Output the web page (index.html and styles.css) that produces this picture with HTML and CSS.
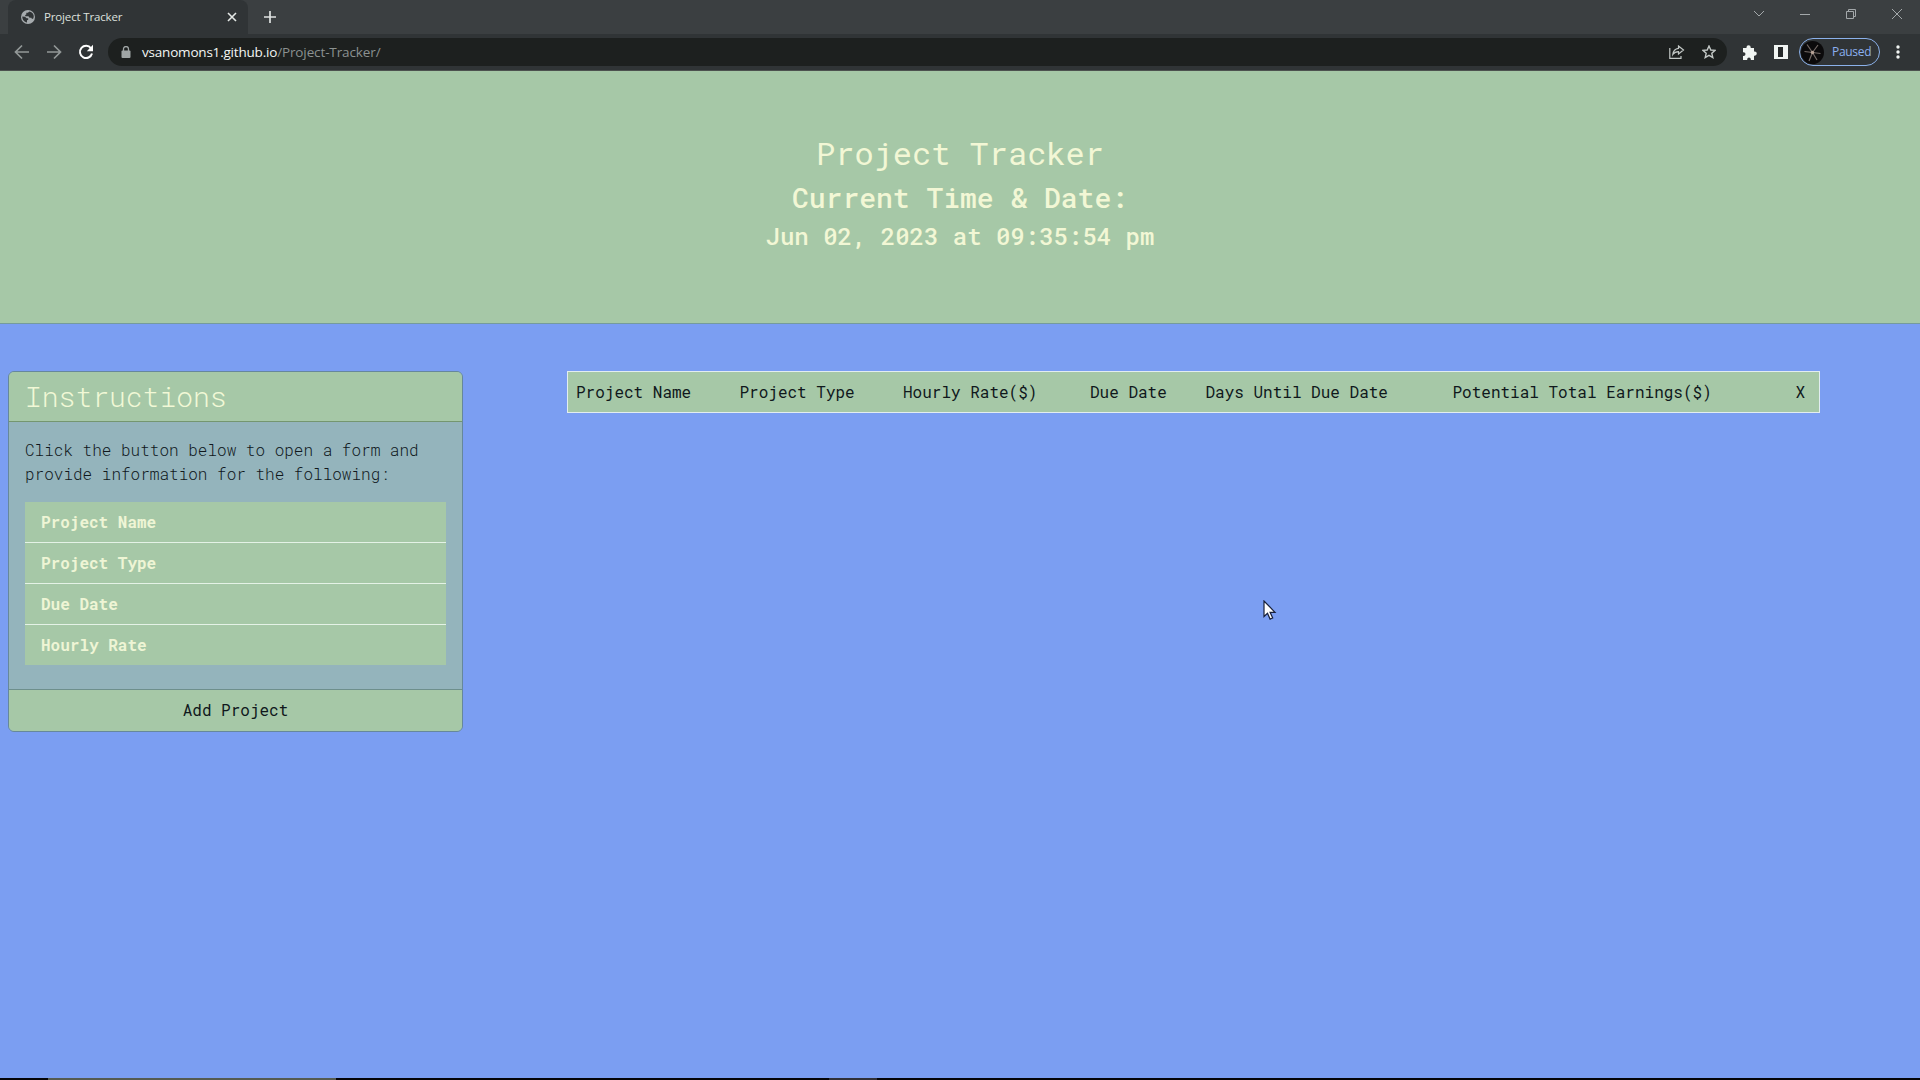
FILE: index.html
```html
<!DOCTYPE html>
<html lang="en">
<head>
<meta charset="utf-8">
<title>Project Tracker</title>
<link rel="stylesheet" href="styles.css">
</head>
<body>
<div class="tabstrip">
  <div class="tab">
    <svg class="globe" width="14" height="14" viewBox="0 0 14 14"><circle cx="7" cy="7" r="7" fill="#a6abae"/><path d="M1.300 6.500 4 6.700 5.700 8.200h1.500v1.600L6 10.300v2.200C3.300 12 1.200 9.700 1.300 6.500zM8.500 1.500 6.800 2.800H5.300v1.700L4.200 5v1.300h3.300l1 1.500h1.800l.7 1.300 1.300-.6C13.700 5.500 12 2.200 8.500 1.500z" fill="#303436"/></svg>
    <span class="tab-title">Project Tracker</span>
    <svg width="10" height="10" viewBox="0 0 10 10" stroke="#e4e8e6" stroke-width="1.600"><path d="M1 1l8 8M9 1L1 9"/></svg>
  </div>
  <svg class="plus" width="12" height="12" viewBox="0 0 12 12" stroke="#dfe2e1" stroke-width="1.700"><path d="M6 0v12M0 6h12"/></svg>
  <div class="window-buttons">
    <svg width="12" height="12" viewBox="0 0 12 12"><path d="M1 3l5 5 5-5"/></svg>
    <svg width="12" height="12" viewBox="0 0 12 12"><path d="M1 6.500h10"/></svg>
    <svg width="12" height="12" viewBox="0 0 12 12"><path d="M1.500 3.500h7v7h-7zM3.500 3.500v-2h7v7h-2"/></svg>
    <svg width="12" height="12" viewBox="0 0 12 12"><path d="M1 1l10 10M11 1L1 11"/></svg>
  </div>
</div>
<div class="toolbar">
  <svg class="nav" width="16" height="16" viewBox="0 0 16 16"><path d="M15 8H2M8 1.500 1.500 8 8 14.500"/></svg>
  <svg class="nav" width="16" height="16" viewBox="0 0 16 16"><path d="M1 8h13M8 1.500 14.500 8 8 14.500"/></svg>
  <svg class="reload" width="16" height="16" viewBox="0 0 16 16"><path d="M13 4.300A6.100 6.100 0 1 0 14 9.500" fill="none" stroke="#fff" stroke-width="2"/><path d="M15 .8v6.400H8.800z" fill="#fff"/></svg>
  <div class="address">
    <svg width="10" height="12" viewBox="0 0 10 12"><rect x=".5" y="4.500" width="9" height="7.500" rx="1" fill="#a0a6a6"/><path d="M2.500 5V3a2.500 2.500 0 0 1 5 0v2" fill="none" stroke="#a0a6a6" stroke-width="1.300"/></svg>
    <div class="url"><b>vsanomons1.github.io</b>/Project-Tracker/</div>
    <svg class="share" width="16" height="14" viewBox="0 0 16 14"><path d="M.8 3v10.300H12V11M9.500 1l5 4-5 4V6.700C7 6.700 5.300 7.500 3.800 9.500 4.200 6 6.200 3.700 9.500 3.300z"/></svg>
    <svg class="star" width="14" height="14" viewBox="0 0 14 14"><path d="M7 1l1.800 4 4.300.4-3.300 2.900 1 4.200L7 10.300l-3.800 2.200 1-4.200L.9 5.400 5.200 5z"/></svg>
  </div>
  <svg class="puzzle" width="15" height="15" viewBox="0 0 15 15"><path d="M1 3h3.500v-.700a2.100 2.100 0 0 1 4.200 0V3H12v3.500h.7a2.100 2.100 0 0 1 0 4.200H12V15H8.800v-.700a1.800 1.800 0 0 0-3.600 0v.700H1v-4h.6a1.900 1.900 0 0 0 0-3.800H1z" fill="#f1f5f3"/></svg>
  <svg class="panel" width="14" height="14" viewBox="0 0 14 14"><path d="M0 0h14v14H0z" fill="#f1f5f3"/><path d="M4 2h5v10H4z" fill="#26292a"/></svg>
  <div class="profile">
    <svg width="23" height="23" viewBox="0 0 23 23"><circle cx="11.500" cy="11.500" r="11.500" fill="#0b0a0b"/><path d="M11.500 11.500 6 3.500M11.500 11.500 17 4M11.500 11.500l8 1M11.500 11.500 16 19M11.500 11.500 8 20M11.500 11.500l-8-1" stroke="#746a66" stroke-width="1.200"/><circle cx="11.500" cy="11.500" r="1.700" fill="#b8a397"/></svg>
    <span>Paused</span>
  </div>
  <svg class="dots" width="4" height="14" viewBox="0 0 4 14" fill="#f1f5f3"><circle cx="2" cy="2" r="1.700"/><circle cx="2" cy="7" r="1.700"/><circle cx="2" cy="12" r="1.700"/></svg>
</div>
<header class="hero">
  <h1>Project Tracker</h1>
  <h2>Current Time &amp; Date:</h2>
  <h3>Jun 02, 2023 at 09:35:54 pm</h3>
</header>
<main class="content">
  <section class="card">
    <h2 class="card-header">Instructions</h2>
    <div class="card-body">
      <p>Click the button below to open a form and provide information for the following:</p>
      <ul>
        <li>Project Name</li>
        <li>Project Type</li>
        <li>Due Date</li>
        <li>Hourly Rate</li>
      </ul>
    </div>
    <button class="add">Add Project</button>
  </section>
  <div class="projects">
    <span>Project Name</span><span>Project Type</span><span>Hourly Rate($)</span><span>Due Date</span><span>Days Until Due Date</span><span>Potential Total Earnings($)</span><span>X</span>
  </div>
</main>
<footer class="taskbar"><i class="active"></i><i class="small"></i></footer>
<svg class="cursor" width="14" height="21" viewBox="0 0 14 21"><path d="M1 1v15.500l3.500-3.300 2.600 5.900 2.600-1.100-2.600-5.700h4.900z" fill="#fff" stroke="#18203a" stroke-width="1.200"/></svg>
</body>
</html>
```
FILE: styles.css
```css
* { box-sizing: border-box; }
body {
  margin: 0;
  height: 1080px;
  overflow: hidden;
  display: flex;
  flex-direction: column;
  background: #7b9ef2;
  color: #10181c;
  font: 16px/24px "Roboto Mono", "DejaVu Sans Mono", monospace;
}
h1, h2, h3, p, ul { margin: 0; padding: 0; font-weight: 400; }
svg { flex: none; }

.tabstrip, .toolbar { display: flex; align-items: center; font-family: "Open Sans", "Noto Sans", sans-serif; }
.tabstrip { height: 34px; background: #3b3f41; }
.tab {
  width: 240px; height: 34px; margin-left: 8px; padding: 0 11px 0 13px;
  display: flex; align-items: center;
  background: #303436; border-radius: 8px 8px 0 0;
}
.tab-title { flex: 1; margin-left: 9px; font-size: 11.500px; letter-spacing: -.15px; color: #dde1df; }
.plus { margin-left: 16px; }
.window-buttons { margin: -6px 17px 0 auto; display: flex; gap: 34px; fill: none; stroke: #a3a8aa; }

.toolbar { height: 37px; padding-left: 14px; background: #303436; border-bottom: 1px solid #4c524f; }
.nav { margin-right: 16px; fill: none; stroke: #929898; stroke-width: 1.700; }
.reload { margin-right: 14px; }
.address {
  width: 1619px; height: 28px; padding: 0 11px 0 13px;
  display: flex; align-items: center;
  background: #1d201f; border-radius: 14px;
}
.url { flex: 1; margin-left: 11px; font-size: 13.500px; letter-spacing: -.12px; color: #8b9190; }
.url b { font-weight: 500; letter-spacing: -.2px; color: #f3f6f4; }
.share, .star { fill: none; stroke: #c3c8c6; stroke-width: 1.200; }
.star { margin-left: 17px; stroke-width: 1.400; }
.puzzle { margin-left: 15px; }
.panel { margin-left: 17px; }
.profile {
  width: 81px; height: 28px; margin-left: 11px; padding-left: 1px;
  display: flex; align-items: center; gap: 8px;
  border: 1px solid #8bb1ea; border-radius: 14px;
  color: #8bb0ef; font-size: 12px; letter-spacing: -.3px;
}
.dots { margin-left: 16px; }

.hero {
  height: 253px; padding-top: 63px; text-align: center;
  background: #a6c8a7; color: #f2f7d5; border-bottom: 1px solid #759b9c;
}
.hero h1 { font-size: 32px; line-height: 38px; margin-bottom: 9px; font-weight: 450; }
.hero h2 { font-size: 28px; line-height: 34px; margin-bottom: 7px; font-weight: 500; }
.hero h3 { font-size: 24px; line-height: 29px; font-weight: 550; }

.content { flex: 1; display: flex; align-items: flex-start; padding: 47px 100px 0 8px; }
.card {
  width: 455px; height: 361px; margin-right: 104px; overflow: hidden;
  display: flex; flex-direction: column;
  background: #94b4bc; border: 1px solid #66889b; border-radius: 6px;
}
.card-header {
  height: 50px; padding-left: 16px;
  font-size: 28px; line-height: 50px; font-weight: 300;
  color: #f1f8d6; background: #a6c8a7; border-bottom: 1px solid #74966f;
}
.card-body { flex: 1; padding: 16px 16px 0; }
.card-body p { font-weight: 300; }
.card-body ul { margin-top: 16px; list-style: none; color: #eef5d5; background: #a6c8a7; font-weight: 700; }
.card-body li { height: 41px; padding: 8px 16px; border-bottom: 1px solid #e4f2e6; }
.card-body li:last-child { height: 40px; border: 0; }
.add { height: 42px; border: 0; border-top: 1px solid #6e8f8c; background: #a6c8a7; color: inherit; font: inherit; padding: 0 0 2px; }

.projects {
  flex: 1; height: 42px; padding: 0 0 0 8px;
  display: grid; grid-template-columns: 163.500px 163.500px 187px 115.500px 247px 343px 1fr; align-items: center;
  background: #a6c8a7; border: 1px solid #e2edf0;
  white-space: nowrap;
}
.taskbar { height: 2px; display: flex; background: #050508; }
.taskbar .active { width: 288px; margin-left: 48px; background: #555b51; }
.taskbar .small { width: 48px; margin-left: 493px; background: #303038; }
.cursor { position: absolute; left: 1263px; top: 600px; }
```
